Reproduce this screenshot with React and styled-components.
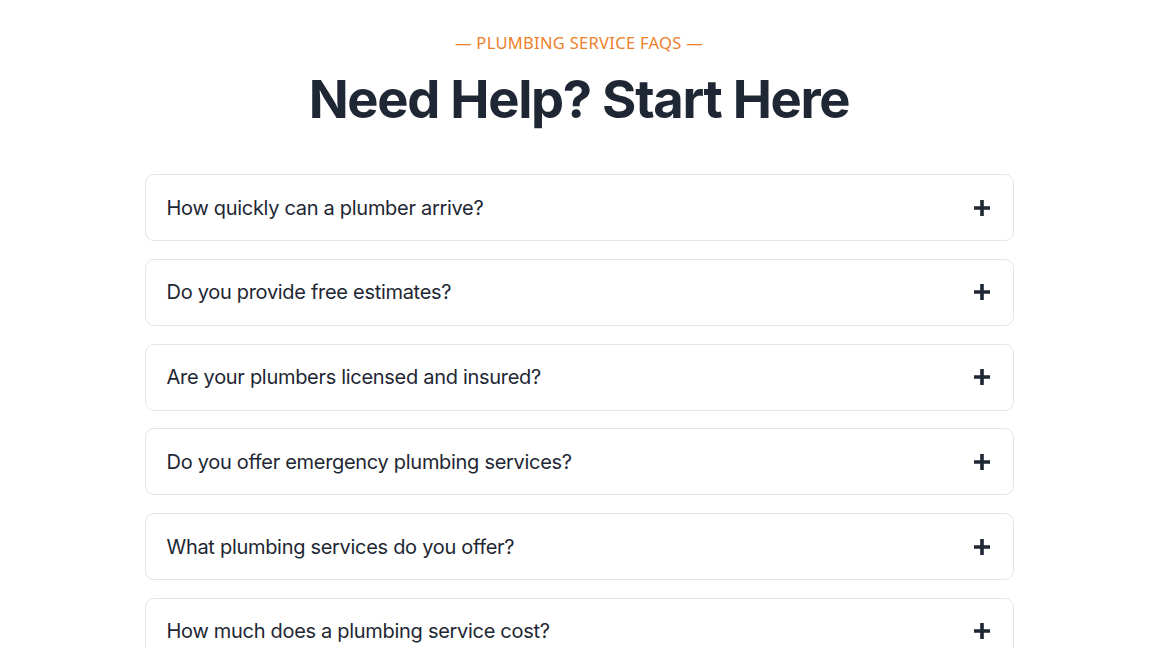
import styled, { createGlobalStyle } from "styled-components";

const faqs = [
  "How quickly can a plumber arrive?",
  "Do you provide free estimates?",
  "Are your plumbers licensed and insured?",
  "Do you offer emergency plumbing services?",
  "What plumbing services do you offer?",
  "How much does a plumbing service cost?",
];

function PlusIcon() {
  return (
    <svg width="20" height="20" viewBox="0 0 20 20" aria-hidden="true">
      <path
        d="M10 2v16M2 10h16"
        stroke="currentColor"
        strokeWidth="3.6"
        strokeLinecap="butt"
        fill="none"
      />
    </svg>
  );
}

function App() {
  return (
    <>
      <GlobalStyle />
      <Section>
        <Eyebrow>— PLUMBING SERVICE FAQS —</Eyebrow>
        <Heading>Need Help? Start Here</Heading>

        <List>
          {faqs.map((q) => (
            <Item key={q}>
              <Question>{q}</Question>
              <Toggle type="button" aria-label="Expand">
                <PlusIcon />
              </Toggle>
            </Item>
          ))}
        </List>
      </Section>
    </>
  );
}

const GlobalStyle = createGlobalStyle`
  html, body {
    margin: 0;
    background: #ffffff;
    font-family: Inter, "Noto Sans", sans-serif;
    color: #1e2733;
  }
  body {
    padding-left: 6px;
  }
`;

const Section = styled.section`
  width: 869px;
  margin: 0 auto;
  padding-top: 33px;
  display: flex;
  flex-direction: column;
  align-items: center;
`;

const Eyebrow = styled.div`
  font-family: "Noto Sans", Inter, sans-serif;
  font-size: 16.5px;
  line-height: 20px;
  color: #ec7f2c;
  letter-spacing: 0.3px;
`;

const Heading = styled.h2`
  margin: 14px 0 0;
  font-size: 52.5px;
  line-height: 64px;
  font-weight: 700;
  letter-spacing: -1.3px;
  color: #1e2733;
`;

const List = styled.div`
  width: 100%;
  margin-top: 43px;
  display: flex;
  flex-direction: column;
  gap: 17.8px;
`;

const Item = styled.div`
  display: flex;
  align-items: center;
  justify-content: space-between;
  height: 67px;
  box-sizing: border-box;
  padding: 0 21px;
  border: 1px solid #e3e5e8;
  border-radius: 9px;
  background: #ffffff;
`;

const Question = styled.span`
  font-size: 20px;
  font-weight: 430;
  letter-spacing: -0.3px;
  color: #1e2733;
`;

const Toggle = styled.button`
  display: flex;
  padding: 0;
  border: none;
  background: none;
  color: #1e2733;
  cursor: pointer;
`;

export default App;
